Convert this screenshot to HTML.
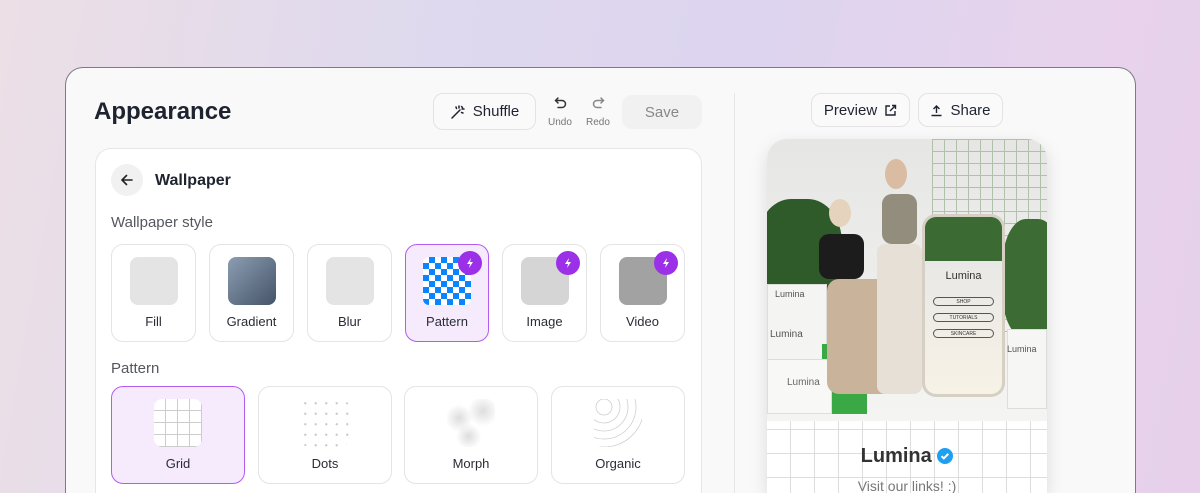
<!DOCTYPE html>
<html><head><meta charset="utf-8"><style>
*{box-sizing:border-box;margin:0;padding:0}
html,body{width:1200px;height:493px;overflow:hidden}
body{font-family:"Liberation Sans",sans-serif;background:linear-gradient(100deg,#ecdfe6 0%,#ded9ee 35%,#ddd4ef 60%,#e8d3ec 85%,#e6d0ea 100%);position:relative;color:#1e2330}
.card{position:absolute;left:65px;top:67px;width:1071px;height:426px;background:#f9f9f9;border:1px solid #7c7a84;border-bottom:none;border-radius:18px 18px 0 0}
.abs{position:absolute}
.btn{position:absolute;border:1px solid #e3e3e3;border-radius:10px;background:#fafafa;font-size:15px;display:flex;align-items:center;justify-content:center;gap:7px;color:#1e2330}
.panel{position:absolute;left:95px;top:148px;width:607px;height:345px;background:#fff;border:1px solid #e6e6e6;border-bottom:none;border-radius:16px 16px 0 0}
.tile{position:absolute;border:1px solid #e4e4e4;border-radius:12px;background:#fff}
.tile .th{position:absolute;top:12px;left:50%;margin-left:-24px;width:48px;height:48px;border-radius:8px}
.tile .lb{position:absolute;top:69px;width:100%;text-align:center;font-size:13px;color:#2a2d36}
.sel{background:#f6eafd;border-color:#b45cf0}
.bolt{position:absolute;top:6px;right:6px;width:24px;height:24px;border-radius:50%;background:#9b30e8;display:flex;align-items:center;justify-content:center}
.lbl{position:absolute;font-size:15px;color:#55575e}
</style></head><body>
<div class="card"></div>
<div class="abs" style="left:94px;top:98px;font-size:24px;font-weight:bold;color:#1e2330">Appearance</div>
<div class="btn" style="left:433px;top:93px;width:103px;height:37px">
<svg width="16" height="16" viewBox="0 0 16 16" fill="none" stroke="#1e2330" stroke-width="1.5" stroke-linecap="round"><path d="M2 14L10 6M9 2v2M12 5h2M11.5 2.5l1 1M6 3l.5 1.5M13 9l-1.5-.5"/></svg>Shuffle</div>
<svg class="abs" style="left:554px;top:96px" width="14" height="14" viewBox="0 0 14 14" fill="none" stroke="#333" stroke-width="1.5" stroke-linecap="round"><path d="M4 2L1.5 4.5 4 7M2 4.5h6a3.5 3.5 0 010 7H4"/></svg>
<div class="abs" style="left:548px;top:117px;font-size:10px;color:#777">Undo</div>
<svg class="abs" style="left:591px;top:96px" width="14" height="14" viewBox="0 0 14 14" fill="none" stroke="#888" stroke-width="1.5" stroke-linecap="round"><path d="M10 2l2.5 2.5L10 7M12 4.5H6a3.5 3.5 0 000 7h4"/></svg>
<div class="abs" style="left:586px;top:117px;font-size:10px;color:#777">Redo</div>
<div class="abs" style="left:622px;top:95px;width:80px;height:34px;border-radius:10px;background:#f1f1f1;color:#888;font-size:15px;display:flex;align-items:center;justify-content:center">Save</div>
<div class="abs" style="left:734px;top:93px;width:1px;height:400px;background:#e6e6e6"></div>

<div class="panel"></div>
<div class="abs" style="left:111px;top:164px;width:32px;height:32px;border-radius:50%;background:#f1f1f1;display:flex;align-items:center;justify-content:center"><svg width="14" height="14" viewBox="0 0 14 14" fill="none" stroke="#222" stroke-width="1.6" stroke-linecap="round"><path d="M12 7H2M6.5 2.5L2 7l4.5 4.5"/></svg></div>
<div class="abs" style="left:155px;top:172px;font-size:16px;font-weight:bold">Wallpaper</div>
<div class="lbl" style="left:111px;top:214px">Wallpaper style</div>

<div class="tile" style="left:111px;top:244px;width:85px;height:98px"><div class="th" style="background:#e4e4e4"></div><div class="lb">Fill</div></div>
<div class="tile" style="left:209px;top:244px;width:85px;height:98px"><div class="th" style="background:linear-gradient(135deg,#8c9db2,#455468)"></div><div class="lb">Gradient</div></div>
<div class="tile" style="left:307px;top:244px;width:85px;height:98px"><div class="th" style="background:#e4e4e4"></div><div class="lb">Blur</div></div>
<div class="tile sel" style="left:405px;top:244px;width:84px;height:98px"><div class="th" style="border-radius:6px;background-color:#fff;background-image:conic-gradient(#0a84ff 25%,#fff 25% 50%,#0a84ff 50% 75%,#fff 75%);background-size:12px 12px"></div><div class="lb">Pattern</div><div class="bolt"><svg width="12" height="12" viewBox="0 0 12 12"><path d="M7 1L3 7h3l-1 4 4-6H6z" fill="#fff"/></svg></div></div>
<div class="tile" style="left:502px;top:244px;width:85px;height:98px"><div class="th" style="background:#d5d5d5"></div><div class="lb">Image</div><div class="bolt"><svg width="12" height="12" viewBox="0 0 12 12"><path d="M7 1L3 7h3l-1 4 4-6H6z" fill="#fff"/></svg></div></div>
<div class="tile" style="left:600px;top:244px;width:85px;height:98px"><div class="th" style="background:#a2a2a2"></div><div class="lb">Video</div><div class="bolt"><svg width="12" height="12" viewBox="0 0 12 12"><path d="M7 1L3 7h3l-1 4 4-6H6z" fill="#fff"/></svg></div></div>

<div class="lbl" style="left:111px;top:360px">Pattern</div>
<div class="tile sel" style="left:111px;top:386px;width:134px;height:98px"><div class="th" style="background-color:#fff;background-image:linear-gradient(#ccc 1px,transparent 1px),linear-gradient(90deg,#ccc 1px,transparent 1px);background-size:12px 12px;background-position:-1px -1px"></div><div class="lb">Grid</div></div>
<div class="tile" style="left:258px;top:386px;width:134px;height:98px"><div class="th" style="background-image:radial-gradient(#ccc 1px,transparent 1.3px);background-size:10.5px 10.5px;background-position:-1px -1px"></div><div class="lb">Dots</div></div>
<div class="tile" style="left:404px;top:386px;width:134px;height:98px"><div class="th" style="background:radial-gradient(circle at 25% 40%,#ddd,transparent 30%),radial-gradient(circle at 75% 25%,#ddd,transparent 30%),radial-gradient(circle at 45% 78%,#ddd,transparent 28%)"></div><div class="lb">Morph</div></div>
<div class="tile" style="left:551px;top:386px;width:134px;height:98px"><svg class="th" viewBox="0 0 48 48" fill="none" stroke="#cfcfcf" stroke-width="0.8"><circle cx="10" cy="8" r="8"/><circle cx="10" cy="8" r="16"/><circle cx="10" cy="8" r="24"/><circle cx="10" cy="8" r="32"/><circle cx="10" cy="8" r="40"/></svg><div class="lb">Organic</div></div>

<div class="btn" style="left:811px;top:93px;width:99px;height:34px">Preview <svg width="13" height="13" viewBox="0 0 13 13" fill="none" stroke="#1e2330" stroke-width="1.4"><path d="M6 2H2v9h9V7M8 1.5h3.5V5M11.5 1.5L6 7"/></svg></div>
<div class="btn" style="left:918px;top:93px;width:85px;height:34px"><svg width="13" height="13" viewBox="0 0 13 13" fill="none" stroke="#1e2330" stroke-width="1.4"><path d="M6.5 9V2M3.5 5l3-3 3 3M1.5 11.5h10"/></svg>Share</div>

<div class="abs" style="left:767px;top:139px;width:280px;height:354px;border-radius:20px 20px 0 0;overflow:hidden;background:#fff;box-shadow:0 6px 18px rgba(0,0,0,.12)">
 <div class="abs" style="left:0;top:0;width:280px;height:282px;background:linear-gradient(#e6e6e4,#f4f4f2)"></div>
 <div class="abs" style="left:165px;top:0;width:115px;height:200px;background-image:linear-gradient(#9bb092 1px,transparent 1px),linear-gradient(90deg,#9bb092 1px,transparent 1px);background-size:12px 12px;opacity:.7"></div>
 <div class="abs" style="left:-10px;top:60px;width:85px;height:110px;border-radius:40%;background:#2f5a2a"></div>
 <div class="abs" style="left:235px;top:80px;width:60px;height:120px;border-radius:40%;background:#3c6b33"></div>
 <div class="abs" style="left:0;top:145px;width:60px;height:120px;background:#f4f4f2;border:1px solid #ddd"></div>
 <div class="abs" style="left:8px;top:150px;font-size:9px;color:#555">Lumina</div>
 <div class="abs" style="left:3px;top:190px;font-size:10px;color:#555">Lumina</div>
 <div class="abs" style="left:55px;top:205px;width:45px;height:70px;background:#3aa844"></div>
 <div class="abs" style="left:0;top:220px;width:65px;height:55px;background:#f8f8f6;border:1px solid #ddd"></div>
 <div class="abs" style="left:20px;top:238px;font-size:10px;color:#666">Lumina</div>
 <div class="abs" style="left:52px;top:95px;width:45px;height:45px;background:#1c1c1c;border-radius:10px"></div>
 <div class="abs" style="left:60px;top:140px;width:70px;height:115px;background:#c9b49b;border-radius:12px"></div>
 <div class="abs" style="left:62px;top:60px;width:22px;height:28px;background:#e5d3bd;border-radius:50%"></div>
 <div class="abs" style="left:115px;top:55px;width:35px;height:50px;background:#938d7d;border-radius:10px"></div>
 <div class="abs" style="left:110px;top:105px;width:45px;height:150px;background:#e6e0d6;border-radius:8px"></div>
 <div class="abs" style="left:118px;top:20px;width:22px;height:30px;background:#d9bca1;border-radius:50%"></div>
 <div class="abs" style="left:155px;top:75px;width:83px;height:183px;border-radius:14px;background:#d6cfc4;padding:3px">
  <div style="width:100%;height:100%;border-radius:11px;background:linear-gradient(#3b6a32 0,#3b6a32 25%,#e8e8e6 25%,#f7f2e6);position:relative;font-size:5px;color:#333;text-align:center">
   <div style="position:absolute;top:53px;width:100%;font-size:11px">Lumina</div>
   <div style="position:absolute;top:80px;left:8px;right:8px;height:9px;border:1px solid #555;border-radius:6px;line-height:8px">SHOP</div>
   <div style="position:absolute;top:96px;left:8px;right:8px;height:9px;border:1px solid #555;border-radius:6px;line-height:8px">TUTORIALS</div>
   <div style="position:absolute;top:112px;left:8px;right:8px;height:9px;border:1px solid #555;border-radius:6px;line-height:8px">SKINCARE</div>
  </div></div>
 <div class="abs" style="left:240px;top:190px;width:40px;height:80px;background:#f6f6f4;border:1px solid #ddd"></div>
 <div class="abs" style="left:240px;top:205px;font-size:9px;color:#555">Lumina</div>
 <div class="abs" style="left:0;top:282px;width:280px;height:72px;background-color:#fff;background-image:linear-gradient(#ddd 1px,transparent 1px),linear-gradient(90deg,#ddd 1px,transparent 1px);background-size:24px 24px;background-position:-1px 8px"></div>
 <div class="abs" style="left:0;top:306px;width:280px;text-align:center;font-size:20px;font-weight:bold;color:#333">Lumina <span style="display:inline-block;width:16px;height:16px;border-radius:50%;background:#1ea0f2;vertical-align:-2px;position:relative"><svg width="16" height="16" viewBox="0 0 16 16" style="position:absolute;left:0;top:0" fill="none" stroke="#fff" stroke-width="2"><path d="M4.5 8.2l2.3 2.2 4.5-4.6"/></svg></span></div>
 <div class="abs" style="left:0;top:339px;width:280px;text-align:center;font-size:14px;color:#777;height:15px;overflow:hidden">Visit our links! :)</div>
</div>
</body></html>
